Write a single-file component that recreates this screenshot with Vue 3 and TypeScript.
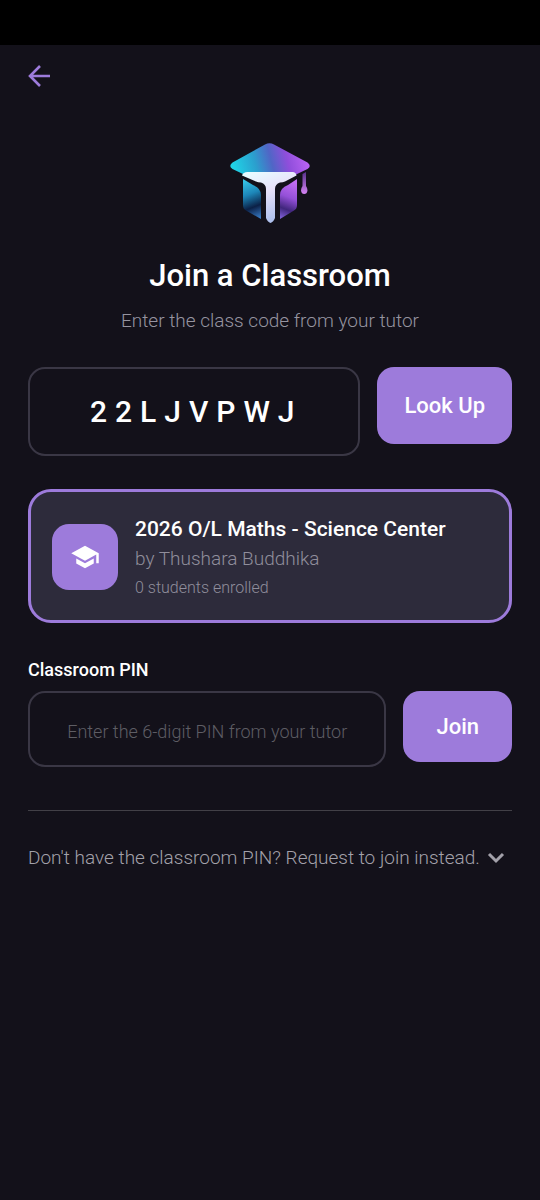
<script setup lang="ts">
import { ref } from 'vue'

interface Classroom {
  name: string
  tutor: string
  enrolled: number
}

const classCode = ref('22LJVPWJ')
const pin = ref('')
const requestOpen = ref(false)
const classroom: Classroom = {
  name: '2026 O/L Maths - Science Center',
  tutor: 'Thushara Buddhika',
  enrolled: 0,
}
</script>

<template>
  <div class="screen">
    <div class="status-bar"></div>
    <header class="top-bar">
      <button class="back" type="button" aria-label="Back">
        <svg viewBox="0 0 24 24" width="24" height="24" fill="none" stroke="currentColor" stroke-width="2.6">
          <path d="M23 12H3M13 2 3 12l10 10" />
        </svg>
      </button>
    </header>

    <main class="content">
      <svg class="logo" viewBox="0 0 84 84" width="84" height="84" aria-hidden="true">
        <defs>
          <linearGradient id="cap" x1="8" y1="34" x2="78" y2="16" gradientUnits="userSpaceOnUse">
            <stop offset="0" stop-color="#20d2e6" />
            <stop offset="0.3" stop-color="#2b9fce" />
            <stop offset="0.52" stop-color="#5066c6" />
            <stop offset="0.74" stop-color="#8f4edb" />
            <stop offset="1" stop-color="#b862f2" />
          </linearGradient>
          <linearGradient id="left" x1="16" y1="40" x2="31" y2="78" gradientUnits="userSpaceOnUse">
            <stop offset="0" stop-color="#35c4e6" />
            <stop offset="0.35" stop-color="#1d86b8" />
            <stop offset="0.68" stop-color="#0b2046" />
            <stop offset="1" stop-color="#3a80cc" />
          </linearGradient>
          <linearGradient id="right" x1="67" y1="42" x2="53" y2="78" gradientUnits="userSpaceOnUse">
            <stop offset="0" stop-color="#c06cf2" />
            <stop offset="0.4" stop-color="#9450d8" />
            <stop offset="0.72" stop-color="#40267c" />
            <stop offset="1" stop-color="#8464dc" />
          </linearGradient>
          <linearGradient id="stem" x1="26" y1="32" x2="46" y2="82" gradientUnits="userSpaceOnUse">
            <stop offset="0" stop-color="#e8faff" />
            <stop offset="0.4" stop-color="#e8e2fa" />
            <stop offset="1" stop-color="#a9bdec" />
          </linearGradient>
          <linearGradient id="tassel" x1="0" y1="32" x2="0" y2="52" gradientUnits="userSpaceOnUse">
            <stop offset="0" stop-color="#5c3490" />
            <stop offset="1" stop-color="#d080f0" />
          </linearGradient>
        </defs>
        <path fill="url(#cap)" d="M37 3.500Q41.500 1 46 3.500L79.500 21.500Q84 25 79.500 28L68 33.500H16L4.500 28Q0 25 4.500 21.500Z" />
        <path fill="url(#left)" d="M15 38L25 44Q33 47 33 54V78L18 69.500Q15 68 15 64Z" />
        <path fill="url(#right)" d="M69 38L60 44Q52 47 52 54V78L66 69.500Q69 68 69 64Z" />
        <path fill="url(#stem)" d="M14 34.500Q15 31 19.500 31H64.500Q68 31 68.500 34.500L57 40.500Q55 41.500 52 41.500Q47 43 47 48V77Q45.500 81 42.500 82Q39.500 81 38 77V48Q38 43 33 41.500Q30 41.500 28 40.500Z" />
        <path fill="url(#tassel)" d="M74.500 33L78 31V45Q79.500 47 79.500 49.500Q79 53 76.200 53Q73.500 53 73 49.500Q73 47 74.500 45Z" />
      </svg>

      <h1>Join a Classroom</h1>
      <p class="subtitle">Enter the class code from your tutor</p>

      <form class="row code-row" @submit.prevent>
        <input v-model="classCode" class="field code" type="text" aria-label="Class code" />
        <button class="action lookup" type="submit">Look Up</button>
      </form>

      <section class="card">
        <div class="badge">
          <svg viewBox="0 0 24 24" width="30" height="30" fill="currentColor" aria-hidden="true">
            <path d="M5 13.180v4L12 21l7-3.820v-4L12 17l-7-3.820zM12 3 1 9l11 6 9-4.910V17h2V9L12 3z" />
          </svg>
        </div>
        <div class="info">
          <h2>{{ classroom.name }}</h2>
          <p class="tutor">by {{ classroom.tutor }}</p>
          <p class="enrolled">{{ classroom.enrolled }} students enrolled</p>
        </div>
      </section>

      <label class="pin-label" for="pin">Classroom PIN</label>
      <form class="row pin-row" @submit.prevent>
        <input id="pin" v-model="pin" class="field pin" type="text" inputmode="numeric" placeholder="Enter the 6-digit PIN from your tutor" />
        <button class="action join" type="submit">Join</button>
      </form>

      <hr />

      <button class="request" type="button" :aria-expanded="requestOpen" @click="requestOpen = !requestOpen">
        <span>Don't have the classroom PIN? Request to join instead.</span>
        <svg viewBox="0 0 18 12" width="18" height="12" fill="none" stroke="currentColor" stroke-width="3" aria-hidden="true">
          <path d="M2 2l7 7 7-7" />
        </svg>
      </button>
    </main>
  </div>
</template>

<style>
body {
  margin: 0;
  background: #13111a;
}
</style>

<style scoped>
.screen {
  min-height: 100vh;
  background: #13111a;
  color: #fff;
  font-family: Roboto, "Liberation Sans", sans-serif;
}
.screen * {
  box-sizing: border-box;
}
.status-bar {
  height: 45px;
  background: #000;
}
.top-bar {
  display: flex;
  align-items: center;
  height: 62px;
  padding: 0 27px;
}
button {
  margin: 0;
  border: 0;
  font-family: inherit;
  cursor: pointer;
}
.back {
  display: flex;
  padding: 0;
  background: none;
  color: #9d7bdb;
}
.content {
  display: flex;
  flex-direction: column;
  padding: 34px 28px;
}
.logo {
  align-self: center;
}
h1 {
  margin: 33px 0 0;
  font-size: 31px;
  line-height: 36px;
  font-weight: 500;
  text-align: center;
}
.subtitle {
  margin: 15px 0 0;
  font-size: 19px;
  line-height: 24px;
  font-weight: 300;
  text-align: center;
  color: #9694a0;
}
.row {
  display: flex;
  align-items: flex-start;
  gap: 17px;
}
.code-row {
  margin-top: 34px;
}
.field {
  flex: 1;
  min-width: 0;
  border: 2px solid #3a3745;
  border-radius: 17px;
  background: transparent;
  color: #fff;
  font-family: inherit;
  text-align: center;
  outline: none;
}
.code {
  height: 89px;
  padding: 0 4px 0 8px;
  font-size: 30px;
  font-weight: 500;
  letter-spacing: 8px;
}
.action {
  border-radius: 17px;
  background: #9d7bdb;
  color: #fff;
  font-size: 22px;
  font-weight: 500;
}
.lookup {
  height: 77px;
  padding: 0 27px;
}
.card {
  display: flex;
  align-items: center;
  gap: 17px;
  margin-top: 33px;
  padding: 21px 21px 20px;
  border: 3px solid #9d7bdb;
  border-radius: 23px;
  background: #2d2b3b;
}
.badge {
  display: flex;
  flex: none;
  align-items: center;
  justify-content: center;
  width: 66px;
  height: 66px;
  border-radius: 17px;
  background: #9d7bdb;
}
h2 {
  margin: 0;
  font-size: 21px;
  line-height: 32px;
  font-weight: 500;
}
.tutor,
.enrolled {
  margin: 2px 0 0;
  font-size: 19px;
  line-height: 24px;
  font-weight: 300;
  color: #908e9c;
}
.enrolled {
  margin-top: 5px;
  font-size: 16px;
}
.pin-label {
  margin-top: 35px;
  font-size: 18px;
  line-height: 24px;
  font-weight: 500;
}
.pin-row {
  margin-top: 9px;
}
.pin {
  height: 76px;
  padding: 4px 16px 0;
  font-size: 18px;
  font-weight: 300;
}
.pin::placeholder {
  color: #5e5d64;
  opacity: 1;
}
.join {
  height: 71px;
  padding: 0 33px;
}
hr {
  width: 100%;
  height: 1px;
  margin: 43px 0 0;
  border: 0;
  background: #424047;
}
.request {
  display: flex;
  align-items: center;
  justify-content: space-between;
  margin-top: 35px;
  padding: 0 7px 0 0;
  background: none;
  color: #a3a1aa;
  font-size: 19px;
  line-height: 24px;
  font-weight: 300;
  text-align: left;
}
.request svg {
  flex: none;
}
</style>
